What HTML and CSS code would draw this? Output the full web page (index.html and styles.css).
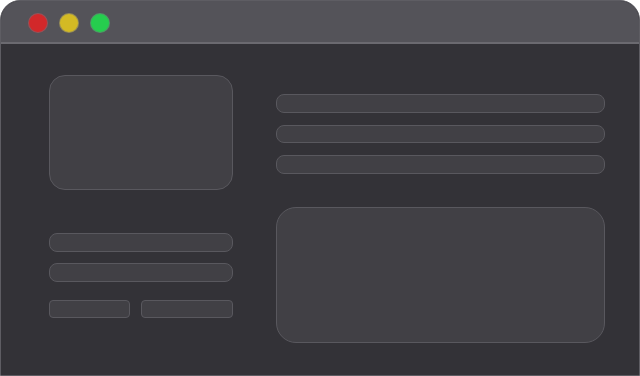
FILE: index.html
```html
<!DOCTYPE html>
<html>
<head>
<meta charset="utf-8">
<link rel="stylesheet" href="styles.css">
</head>
<body>
<div class="window">
  <div class="titlebar">
    <span class="light red"></span>
    <span class="light yellow"></span>
    <span class="light green"></span>
  </div>
  <div class="content">
    <div class="col-left">
      <div class="card-img"></div>
      <div class="bar bar-l1"></div>
      <div class="bar bar-l2"></div>
      <div class="btns">
        <div class="btn btn-a"></div>
        <div class="btn btn-b"></div>
      </div>
    </div>
    <div class="col-right">
      <div class="bar rbar"></div>
      <div class="bar rbar"></div>
      <div class="bar rbar"></div>
      <div class="card-big"></div>
    </div>
  </div>
</div>
</body>
</html>
```

FILE: styles.css
```css
html, body {
  margin: 0;
  padding: 0;
  background: #ffffff;
}
.window {
  width: 640px;
  height: 376px;
  box-sizing: border-box;
  border: 1px solid #5e5d63;
  border-radius: 20px 20px 0 0;
  background: #333237;
  overflow: hidden;
  display: flex;
  flex-direction: column;
}
.titlebar {
  flex: none;
  background: #545359;
  border-bottom: 2px solid #6b6a70;
  display: flex;
  align-items: flex-start;
  gap: 11px;
  padding: 12px 0 0 27px;
  height: 29px;
}
.light {
  width: 20px;
  height: 20px;
  border-radius: 50%;
  box-sizing: border-box;
  border: 1px solid rgba(110, 110, 120, 0.6);
}
.red { background: #d2282a; }
.yellow { background: #d3ba24; }
.green { background: #26cd4e; }
.content {
  flex: 1;
  display: flex;
  padding: 0 34px 0 48px;
  gap: 43px;
}
.col-left {
  width: 184px;
  padding-top: 31px;
  display: flex;
  flex-direction: column;
}
.col-right {
  flex: 1;
  padding-top: 50px;
  display: flex;
  flex-direction: column;
  gap: 12px;
}
.card-img {
  height: 115px;
  box-sizing: border-box;
  border: 1.5px solid #59585e;
  background: #414045;
  border-radius: 16px;
}
.bar {
  box-sizing: border-box;
  border: 1.5px solid #59585e;
  background: #414045;
  border-radius: 8px;
}
.bar-l1 {
  height: 19px;
  margin-top: 43px;
}
.bar-l2 {
  height: 19px;
  margin-top: 11px;
}
.btns {
  display: flex;
  gap: 11px;
  margin-top: 18px;
}
.btn {
  height: 18px;
  box-sizing: border-box;
  border: 1.5px solid #59585e;
  background: #414045;
  border-radius: 4px;
}
.btn-a { width: 81px; }
.btn-b { flex: 1; }
.rbar {
  height: 18.5px;
}
.card-big {
  margin-top: 21.5px;
  height: 136px;
  box-sizing: border-box;
  border: 1.5px solid #59585e;
  background: #414045;
  border-radius: 20px;
}
```
